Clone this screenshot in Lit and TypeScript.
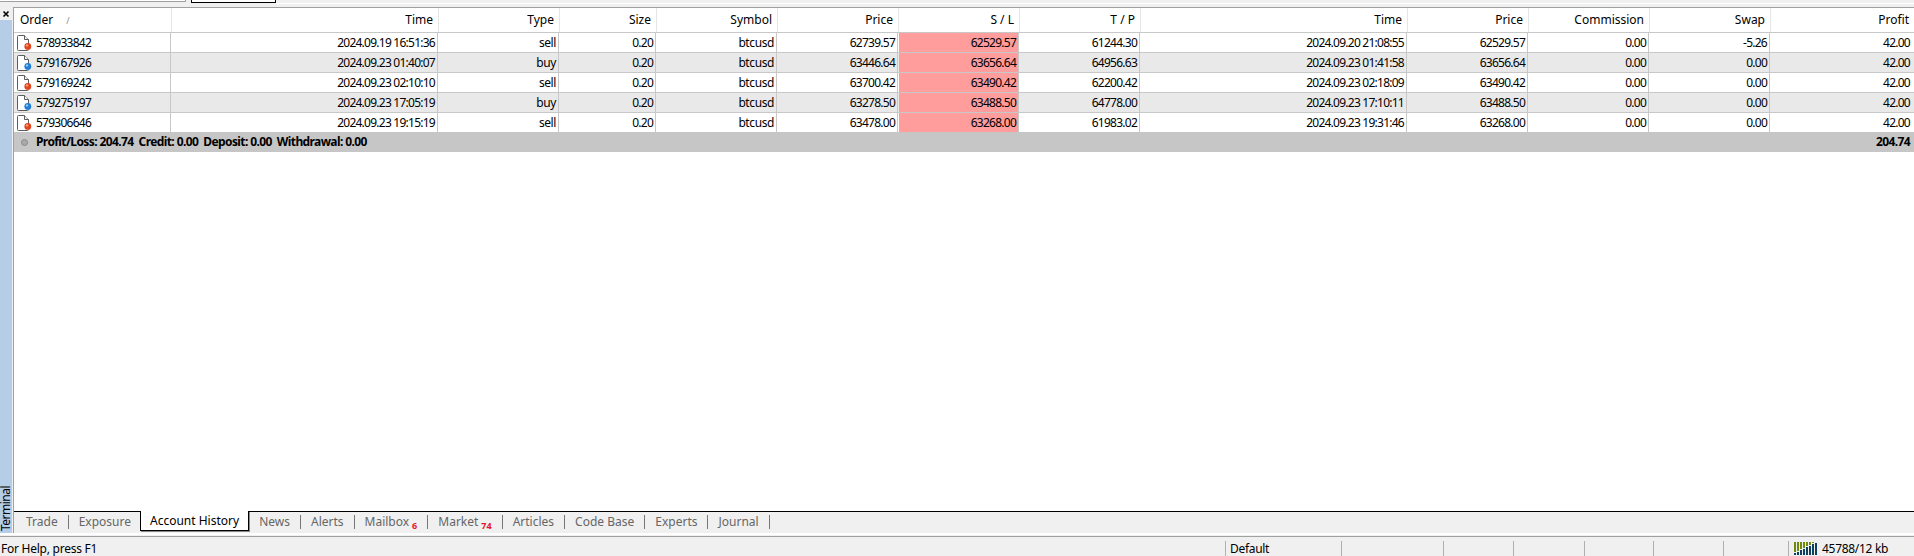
import { css, html, svg, LitElement } from "lit";
import { customElement } from "lit/decorators.js";

const headers = ["Order", "Time", "Type", "Size", "Symbol", "Price", "S / L", "T / P", "Time", "Price", "Commission", "Swap", "Profit"];

const rows = [
  ["578933842", "2024.09.19 16:51:36", "sell", "0.20", "btcusd", "62739.57", "62529.57", "61244.30", "2024.09.20 21:08:55", "62529.57", "0.00", "-5.26", "42.00"],
  ["579167926", "2024.09.23 01:40:07", "buy", "0.20", "btcusd", "63446.64", "63656.64", "64956.63", "2024.09.23 01:41:58", "63656.64", "0.00", "0.00", "42.00"],
  ["579169242", "2024.09.23 02:10:10", "sell", "0.20", "btcusd", "63700.42", "63490.42", "62200.42", "2024.09.23 02:18:09", "63490.42", "0.00", "0.00", "42.00"],
  ["579275197", "2024.09.23 17:05:19", "buy", "0.20", "btcusd", "63278.50", "63488.50", "64778.00", "2024.09.23 17:10:11", "63488.50", "0.00", "0.00", "42.00"],
  ["579306646", "2024.09.23 19:15:19", "sell", "0.20", "btcusd", "63478.00", "63268.00", "61983.02", "2024.09.23 19:31:46", "63268.00", "0.00", "0.00", "42.00"],
];

const tabs: { label: string; count?: string; active?: boolean }[] = [
  { label: "Trade" },
  { label: "Exposure" },
  { label: "Account History", active: true },
  { label: "News" },
  { label: "Alerts" },
  { label: "Mailbox", count: "6" },
  { label: "Market", count: "74" },
  { label: "Articles" },
  { label: "Code Base" },
  { label: "Experts" },
  { label: "Journal" },
];

const statusCells = [116, 102, 70, 71, 69, 70, 65];

function orderIcon(type: string) {
  const ball = type === "buy" ? "#1f7fd6" : "#e2451b";
  const shine = type === "buy" ? "#8cc8f5" : "#f7a27f";
  return html`<svg class="order-icon" width="15" height="16" viewBox="0 0 15 16">
    <path d="M.5 1.5a1 1 0 0 1 1-1h6l4 4v10a1 1 0 0 1-1 1h-9a1 1 0 0 1-1-1z" fill="#fff" stroke="#5c5c5c" />
    <path d="M7.5 .5v4h4" fill="#f2f2f2" stroke="#5c5c5c" />
    <circle cx="10.8" cy="11.4" r="3.4" fill=${ball} />
    <circle cx="10" cy="10.4" r="1.2" fill=${shine} />
  </svg>`;
}

function signalBars() {
  const heights = [2, 3, 5, 6, 8, 9, 11, 12];
  return html`<svg class="signal" width="24" height="13" viewBox="0 0 24 13">
    ${heights.map(
      (h, i) => svg`
        <rect x=${i * 3} y="0" width="2" height=${13 - h - 1} fill="#6f8a0a" />
        <rect x=${i * 3} y=${13 - h} width="2" height=${h} fill="#0d3f5f" />`,
    )}
  </svg>`;
}

@customElement("app-root")
export class AppRoot extends LitElement {
  static styles = css`
    :host {
      display: flex;
      flex-direction: column;
      width: 1914px;
      height: 556px;
      overflow: hidden;
      background: #f0f0f0;
      color: #000;
      font: 12px/1 "Noto Sans", "Liberation Sans", sans-serif;
      --columns: 158px 267px 121px 97px 121px 121px 121px 121px 267px 121px 121px 121px 143px;
    }

    .top-strip {
      display: flex;
      height: 7px;
      flex: none;
    }
    .top-tab {
      width: 186px;
      height: 2px;
      background: #fff;
      border-bottom: 1px solid #a0a0a0;
      border-right: 1px solid #a0a0a0;
      box-sizing: border-box;
    }
    .top-tab--active {
      width: 85px;
      margin-left: 5px;
      border: 1px solid #000;
      border-top: 0;
      height: 3px;
    }
    .top-rest {
      flex: 1;
      height: 1px;
      margin-top: 3px;
      background: #fff;
    }

    .middle {
      display: flex;
      height: 526px;
      flex: none;
    }
    .side {
      display: flex;
      flex-direction: column;
      width: 13px;
      flex: none;
    }
    .close {
      display: flex;
      align-items: center;
      height: 13px;
      padding-left: 2px;
    }
    .side-label {
      flex: 1;
      display: flex;
      justify-content: flex-start;
      align-items: flex-start;
      width: 12px;
      background: #b5cde6;
      writing-mode: vertical-rl;
      transform: rotate(180deg);
    }
    .side-label span {
      padding: 2px 0 0 0;
      line-height: 12px;
      letter-spacing: -0.5px;
    }

    .panel {
      flex: 1;
      display: flex;
      flex-direction: column;
      min-width: 0;
      border-left: 1px solid #a0a0a0;
    }
    .grid {
      flex: 1;
      background: #fff;
      border-top: 1px solid #a0a0a0;
    }
    .row {
      display: grid;
      grid-template-columns: var(--columns);
    }
    .head {
      height: 25px;
      border-bottom: 1px solid #c8c8c8;
      box-sizing: border-box;
    }
    .head div {
      display: flex;
      align-items: center;
      justify-content: flex-end;
      padding-right: 5px;
      border-right: 1px solid #e5e5e5;
    }
    .head div:first-child {
      justify-content: flex-start;
      padding-left: 6px;
    }
    .head div:last-child {
      border-right: 0;
    }
    .sort {
      margin-left: 13px;
      color: #8a8a8a;
      font-size: 9px;
    }
    .body-row {
      height: 20px;
      border-bottom: 1px solid #c8c8c8;
      box-sizing: border-box;
    }
    .body-row:nth-child(even) {
      background: #e9e9e9;
    }
    .body-row.last {
      height: 19px;
      border-bottom: 0;
    }
    .cell {
      display: flex;
      align-items: center;
      justify-content: flex-end;
      margin-right: 1px;
      padding-right: 2px;
      border-right: 1px solid #c8c8c8;
      letter-spacing: -0.75px;
    }
    .cell--text {
      letter-spacing: -0.4px;
    }
    .cell--order {
      justify-content: flex-start;
      padding-left: 3px;
      gap: 4px;
    }
    .cell--sl {
      background: #ff9c9c;
    }
    .cell:last-child {
      margin-right: 0;
      padding-right: 4px;
      border-right: 0;
    }
    .order-icon {
      flex: none;
    }
    .summary {
      display: flex;
      align-items: center;
      justify-content: space-between;
      height: 20px;
      padding: 0 4px 0 7px;
      background: #c6c6c6;
      font-weight: bold;
      letter-spacing: -0.6px;
    }
    .summary-left {
      display: flex;
      align-items: center;
      gap: 8px;
    }
    .summary-left span {
      white-space: pre;
    }
    .dot {
      width: 5px;
      height: 5px;
      border-radius: 50%;
      background: #aaa;
      border: 1px solid #8a8a8a;
    }

    .tabs {
      display: flex;
      height: 22px;
      flex: none;
      padding-left: 2px;
      border-top: 1px solid #000;
      box-sizing: border-box;
      color: #666;
    }
    .tab {
      display: flex;
      align-items: center;
      height: 14px;
      margin-top: 3px;
      padding: 0 10px;
      border-right: 1px solid #777;
      white-space: nowrap;
    }
    .tab sub {
      margin-left: 3px;
      margin-top: 6px;
      color: #e8112d;
      font-size: 9px;
      font-weight: bold;
      vertical-align: baseline;
    }
    .tab--active {
      height: 18px;
      margin-top: -1px;
      margin-left: -1px;
      padding: 1px 9px 0;
      background: #fff;
      color: #000;
      border-left: 1px solid #000;
      border-right: 1px solid #000;
      border-bottom: 1px solid #000;
      box-shadow: 1px 1px 0 #8a8a8a;
    }
    .tab--before-active {
      border-right: 0;
    }

    .rule {
      height: 4px;
      flex: none;
      box-sizing: border-box;
      border-top: 2px solid #fff;
      border-bottom: 1px solid #a0a0a0;
    }

    .status {
      flex: 1;
      display: flex;
      align-items: flex-end;
      padding-left: 1px;
    }
    .status-help {
      flex: 1;
      height: 14px;
      line-height: 14px;
      letter-spacing: -0.25px;
    }
    .status-cell {
      display: flex;
      align-items: center;
      box-sizing: border-box;
      height: 15px;
      padding-left: 4px;
      border-left: 1px solid #b0b0b0;
      letter-spacing: -0.3px;
    }
    .status-net {
      width: 126px;
      padding-left: 5px;
      gap: 4px;
    }
  `;

  render() {
    return html`
      <div class="top-strip">
        <div class="top-tab"></div>
        <div class="top-tab top-tab--active"></div>
        <div class="top-rest"></div>
      </div>

      <div class="middle">
        <div class="side">
          <div class="close">
            <svg width="8" height="8" viewBox="0 0 8 8">
              <path d="M1.5 1.5l5 5M6.5 1.5l-5 5" stroke="#000" stroke-width="1.6" fill="none" />
            </svg>
          </div>
          <div class="side-label"><span>Terminal</span></div>
        </div>

        <div class="panel">
          <div class="grid">
            <div class="row head">
              ${headers.map(
                (h, i) => html`<div>${h}${i === 0 ? html`<span class="sort">/</span>` : ""}</div>`,
              )}
            </div>
            <div>
              ${rows.map(
                (r, i) => html`<div class="row body-row ${i === rows.length - 1 ? "last" : ""}">
                  ${r.map((v, c) =>
                    c === 0
                      ? html`<div class="cell cell--order">${orderIcon(r[2])}<span>${v}</span></div>`
                      : html`<div class="cell ${c === 6 ? "cell--sl" : ""} ${c === 2 || c === 4 ? "cell--text" : ""}">${v}</div>`,
                  )}
                </div>`,
              )}
            </div>
            <div class="summary">
              <div class="summary-left">
                <i class="dot"></i>
                <span>Profit/Loss: 204.74  Credit: 0.00  Deposit: 0.00  Withdrawal: 0.00</span>
              </div>
              <span>204.74</span>
            </div>
          </div>

          <div class="tabs">
            ${tabs.map(
              (t, i) => html`<div
                class="tab ${t.active ? "tab--active" : ""} ${tabs[i + 1]?.active ? "tab--before-active" : ""}"
              >
                ${t.label}${t.count ? html`<sub>${t.count}</sub>` : ""}
              </div>`,
            )}
          </div>
        </div>
      </div>

      <div class="rule"></div>

      <div class="status">
        <div class="status-help">For Help, press F1</div>
        <div class="status-cell" style="width:${statusCells[0]}px">Default</div>
        ${statusCells.slice(1).map((w) => html`<div class="status-cell" style="width:${w}px"></div>`)}
        <div class="status-cell status-net">${signalBars()}<span>45788/12 kb</span></div>
      </div>
    `;
  }
}
